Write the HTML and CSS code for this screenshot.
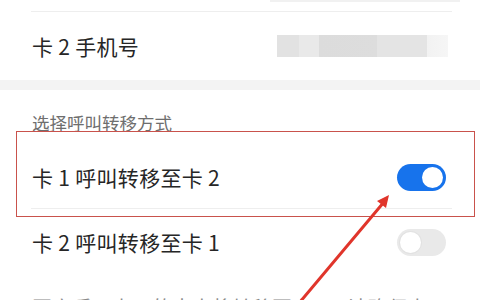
FILE: index.html
```html
<!DOCTYPE html>
<html lang="zh">
<head>
<meta charset="utf-8">
<link rel="stylesheet" href="styles.css">
</head>
<body>
<div class="screen">
  <div class="prev"><div class="prev-blur"></div></div>
  <div class="divider"></div>
  <div class="row row-phone">
    <span class="label">卡 2 手机号</span>
    <span class="blurred"></span>
  </div>
  <div class="band"></div>
  <div class="section-title">选择呼叫转移方式</div>
  <div class="row row-switch first">
    <span class="label">卡 1 呼叫转移至卡 2</span>
    <span class="toggle on"><span class="knob"></span></span>
  </div>
  <div class="divider"></div>
  <div class="row row-switch second">
    <span class="label">卡 2 呼叫转移至卡 1</span>
    <span class="toggle off"><span class="knob"></span></span>
  </div>
  <p class="note">开启后，卡 1 的来电将转移至卡 2，请确保卡 2 可正常接听</p>

  <div class="highlight"></div>
  <svg class="arrow" width="480" height="300" viewBox="0 0 480 300">
    <line x1="300" y1="302" x2="384" y2="202" stroke="#e0352b" stroke-width="3" stroke-linecap="round"/>
    <path d="M389 195 L377 201 L386 208 Z" fill="#e0352b"/>
  </svg>
</div>
</body>
</html>
```
FILE: styles.css
```css
html, body {
  margin: 0;
  padding: 0;
  background: #ffffff;
}
.screen {
  position: relative;
  width: 480px;
  height: 300px;
  overflow: hidden;
  font-family: "Noto Sans CJK SC", "Noto Sans", sans-serif;
  color: #262626;
}
.prev {
  height: 11px;
  display: flex;
  justify-content: flex-end;
  padding-right: 20px;
}
.prev-blur {
  width: 190px;
  height: 2px;
  background: #f1f1f1;
}
.divider {
  height: 1px;
  margin: 0 28px 0 31px;
  background: #eeeeee;
}
.row {
  display: flex;
  align-items: center;
  justify-content: space-between;
  padding: 0 34px 0 32px;
}
.label {
  font-size: 21px;
  line-height: 26px;
  letter-spacing: 0.3px;
}
.row-phone {
  height: 68px;
  padding-right: 32px;
}
.blurred {
  width: 171px;
  height: 22px;
  background: linear-gradient(90deg, #e2e2e2 0, #e2e2e2 22px, #e9e9e9 22px, #e9e9e9 42px, #dcdcdc 42px, #dddddd 100px, #e4e4e4 100px, #e4e4e4 150px, #f2f2f2 150px, #f6f6f6 171px);
}
.band {
  height: 10px;
  background: #f3f3f3;
}
.section-title {
  padding: 23px 32px 13px;
  font-size: 17.5px;
  line-height: 20px;
  color: #6e6e6e;
}
.row-switch.first {
  height: 62px;
}
.row-switch.second {
  height: 66px;
}
.toggle {
  position: relative;
  width: 49px;
  height: 27px;
  border-radius: 14px;
  box-sizing: border-box;
}
.toggle.on {
  background: #1773ec;
}
.toggle.off {
  background: #e9e9e9;
}
.knob {
  position: absolute;
  top: 3px;
  width: 21px;
  height: 21px;
  border-radius: 50%;
  background: #ffffff;
}
.toggle.on .knob {
  right: 3px;
}
.toggle.off .knob {
  left: 3px;
  box-shadow: 0 0 0 1px #e2e2e2;
}
.note {
  margin: 19px 0 0;
  padding: 0 32px;
  font-size: 20px;
  line-height: 28px;
  color: #8a8a8a;
  white-space: nowrap;
}
.highlight {
  position: absolute;
  left: 16px;
  top: 131px;
  width: 459px;
  height: 86px;
  box-sizing: border-box;
  border: 1.5px solid #c9524c;
}
.arrow {
  position: absolute;
  left: 0;
  top: 0;
}
```
